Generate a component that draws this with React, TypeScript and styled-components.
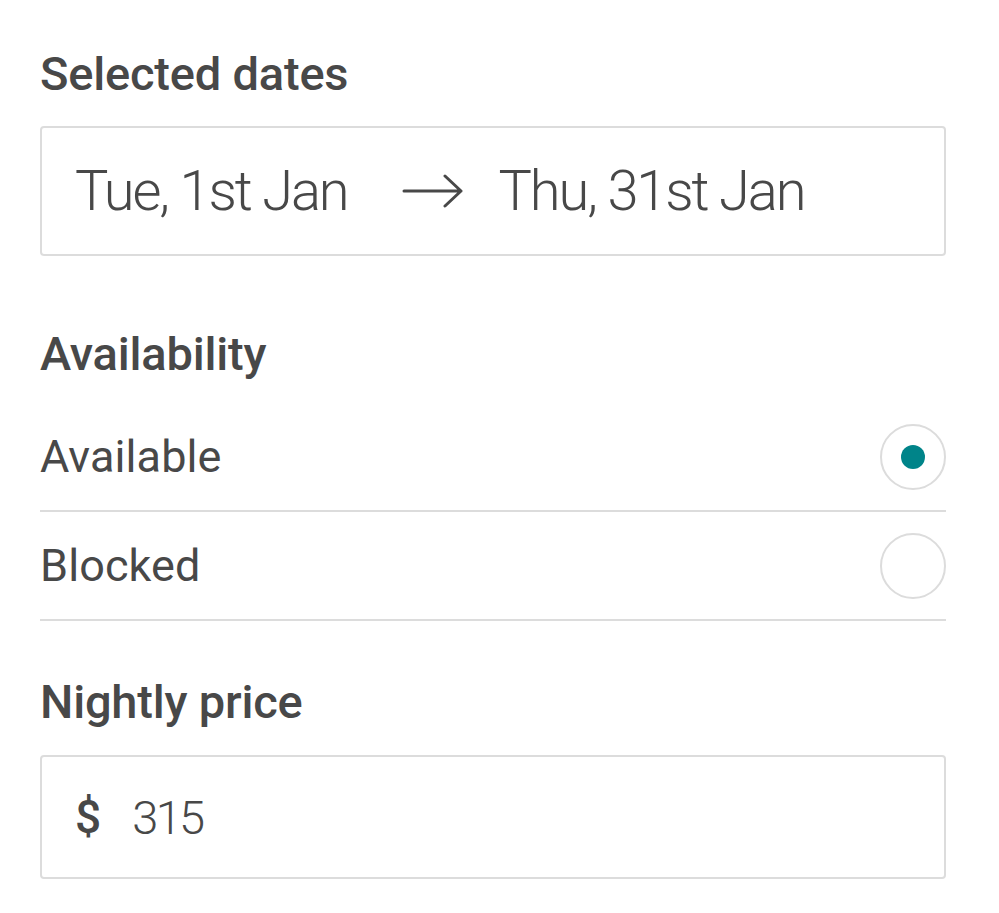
import React from 'react';
import styled, { createGlobalStyle } from 'styled-components';

const GlobalStyle = createGlobalStyle`
  html, body {
    margin: 0;
    padding: 0;
    background: #ffffff;
  }
  body {
    font-family: Roboto, 'Noto Sans', sans-serif;
    color: #484848;
  }
`;

const Panel = styled.div`
  width: 906px;
  padding: 47px 0 0 40px;
  display: flex;
  flex-direction: column;
`;

const SectionTitle = styled.h2<{ $top?: number }>`
  margin: ${(p) => p.$top ?? 0}px 0 0 0;
  font-size: 47px;
  line-height: 54px;
  font-weight: 500;
  letter-spacing: -0.2px;
  color: #484848;
`;

const InputBox = styled.div<{ $height: number; $top: number }>`
  margin-top: ${(p) => p.$top}px;
  height: ${(p) => p.$height}px;
  box-sizing: border-box;
  border: 2px solid #dcdcdc;
  border-radius: 4px;
  display: flex;
  align-items: center;
  padding-left: 33px;
`;

const DateText = styled.span`
  font-size: 56px;
  font-weight: 300;
  letter-spacing: -2.1px;
  color: #484848;
`;

const Arrow = styled.svg`
  width: 62px;
  height: 34px;
  margin: 0 35px 0 54px;
`;

const OptionList = styled.div`
  margin-top: 22px;
  display: flex;
  flex-direction: column;
`;

const OptionRow = styled.label`
  height: 107px;
  display: flex;
  align-items: center;
  justify-content: space-between;
  border-bottom: 2px solid #dcdcdc;
  cursor: pointer;
`;

const OptionLabel = styled.span`
  font-size: 45px;
  font-weight: 400;
  letter-spacing: 0.1px;
  color: #484848;
`;

const Radio = styled.span<{ $checked: boolean }>`
  width: 66px;
  height: 66px;
  box-sizing: border-box;
  border: 2px solid #dcdcdc;
  border-radius: 50%;
  display: flex;
  align-items: center;
  justify-content: center;

  &::after {
    content: '';
    display: ${(p) => (p.$checked ? 'block' : 'none')};
    width: 24px;
    height: 24px;
    border-radius: 50%;
    background: #008489;
  }
`;

const Currency = styled.span`
  font-size: 46px;
  font-weight: 500;
  color: #484848;
  margin-right: 31px;
`;

const PriceText = styled.span`
  font-size: 47px;
  font-weight: 300;
  letter-spacing: -2.6px;
  color: #484848;
`;

const options = [
  { label: 'Available', checked: true },
  { label: 'Blocked', checked: false },
];

export default function App() {
  return (
    <>
      <GlobalStyle />
      <Panel>
        <SectionTitle>Selected dates</SectionTitle>
        <InputBox $height={130} $top={25}>
          <DateText>Tue, 1st Jan</DateText>
          <Arrow viewBox="0 0 62 34" fill="none" stroke="#484848" strokeWidth="3" strokeLinecap="round" strokeLinejoin="round">
            <path d="M2 17 H59 M43 2 L59 17 L43 32" />
          </Arrow>
          <DateText>Thu, 31st Jan</DateText>
        </InputBox>

        <SectionTitle $top={71}>Availability</SectionTitle>
        <OptionList>
          {options.map((o) => (
            <OptionRow key={o.label}>
              <OptionLabel>{o.label}</OptionLabel>
              <Radio $checked={o.checked} />
            </OptionRow>
          ))}
        </OptionList>

        <SectionTitle $top={54}>Nightly price</SectionTitle>
        <InputBox $height={124} $top={26}>
          <Currency>$</Currency>
          <PriceText>315</PriceText>
        </InputBox>
      </Panel>
    </>
  );
}
